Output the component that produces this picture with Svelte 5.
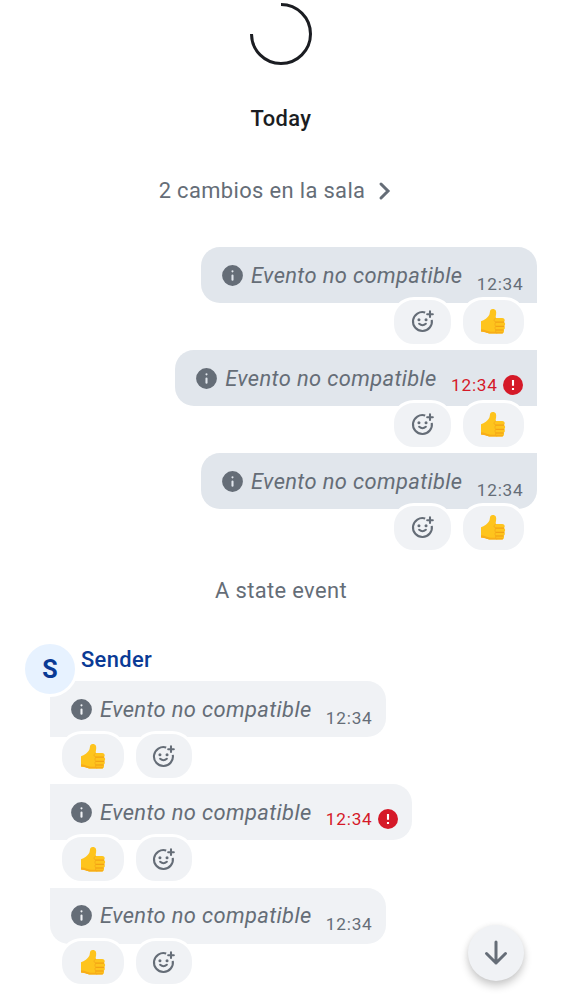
<script>
  const outgoing = [
    { failed: false },
    { failed: true },
    { failed: false }
  ];
  const incoming = [
    { failed: false },
    { failed: true },
    { failed: false }
  ];
</script>

{#snippet info()}
  <svg class="info" viewBox="0 0 24 24">
    <path fill="currentColor" fill-rule="evenodd" d="M12 2a10 10 0 1 1 0 20 10 10 0 0 1 0-20Zm0 9a1 1 0 0 0-1 1v4a1 1 0 0 0 2 0v-4a1 1 0 0 0-1-1Zm0-4a1 1 0 1 0 0 2 1 1 0 0 0 0-2Z" />
  </svg>
{/snippet}

{#snippet bubble(message)}
  <div class="bubble">
    {@render info()}
    <span class="body">Evento no compatible</span>
    <span class="meta" class:failed={message.failed}>
      <span class="time">12:34</span>
      {#if message.failed}
        <svg class="error" viewBox="0 0 20 20">
          <circle cx="10" cy="10" r="10" fill="#d51928" />
          <path d="M10 5v5.8M10 13v2" stroke="#fff" stroke-width="2.1" />
        </svg>
      {/if}
    </span>
  </div>
{/snippet}

{#snippet thumb()}
  <div class="pill thumb">
    <svg viewBox="0 0 26 27" role="img" aria-label="👍">
      <path fill="#fec41d" d="M1 13.2C4.2 12.4 8 9.5 9.3 6.7 10 5 9.7 3 10.5 1.9 11.6.5 15.2.7 15.9 2.8c.8 2.4-.2 5.1-.3 7.1h6.6c1.7 0 2.6 1.1 2.5 2.5-.1.8-.4 1.3-.8 1.7 1.5.8 1.7 3 .3 4.1 1 1 .9 2.8-.5 3.6 1 2-.3 3.8-2.2 3.8H12c-4.5 0-6.2-1.8-11-2.2Z" />
      <path fill="#f8ad18" d="M1 21.2c4.8.5 7 2.5 11 2.5h10.9c.8 1.2-.2 1.9-1.4 1.9H12c-4.5 0-6.2-1.8-11-2.2Z" />
      <path fill="none" stroke="#f09a12" stroke-width="1" stroke-linecap="round" d="M15.7 14.1h8M15.8 18.3h8.2M15.8 22h7.5" />
      <path fill="none" stroke="#f5a91a" stroke-width=".9" stroke-linecap="round" d="M15.6 9.9c-1.5 1-1.9 2.4-1.1 3.4.5.5 1.2.7 1.5.8-1.3 1.2-1.3 3.2-.2 4.2-1.1 1-1 2.8.2 3.7-.7 1.2-.5 2.4.4 3.2" />
    </svg>
  </div>
{/snippet}

{#snippet addReaction()}
  <div class="pill add">
    <svg viewBox="0 0 24 24" fill="none" stroke="currentColor" stroke-width="2">
      <path d="M14.6 3.3A9.1 9.1 0 1 0 20.9 10.4" />
      <path d="M19.2 2.3v5.4M16.5 5h5.4" stroke-linecap="round" />
      <path d="M8.8 14.2q3.2 2.8 6.4 0" stroke-linecap="round" />
      <circle cx="8.6" cy="10.3" r="1.45" fill="currentColor" stroke="none" />
      <circle cx="15.4" cy="10.3" r="1.45" fill="currentColor" stroke="none" />
    </svg>
  </div>
{/snippet}

<main class="timeline">
  <div class="loading">
    <svg viewBox="0 0 62 62" fill="none" stroke="#1b1d22" stroke-width="3">
      <path d="M31 1.5A29.5 29.5 0 1 1 1.5 31" />
    </svg>
  </div>
  <div class="day">Today</div>
  <div class="changes">
    <span>2 cambios en la sala</span>
    <svg viewBox="0 0 12 18" fill="none" stroke="currentColor" stroke-width="3" stroke-linecap="round"><path d="M2 2l7 7-7 7" /></svg>
  </div>

  <section class="group mine">
    {#each outgoing as message}
      <article class="message">
        {@render bubble(message)}
        <div class="reactions">{@render addReaction()}{@render thumb()}</div>
      </article>
    {/each}
  </section>

  <div class="state">A state event</div>

  <header class="sender">
    <div class="avatar">S</div>
    <div class="name">Sender</div>
  </header>
  <section class="group theirs">
    {#each incoming as message}
      <article class="message">
        {@render bubble(message)}
        <div class="reactions">{@render thumb()}{@render addReaction()}</div>
      </article>
    {/each}
  </section>

  <button class="jump" aria-label="Ir al final">
    <svg viewBox="0 0 24 26" fill="none" stroke="currentColor" stroke-width="3" stroke-linecap="round" stroke-linejoin="round"><path d="M12 2v21M2.5 13.5l9.5 9.5 9.5-9.5" /></svg>
  </button>
</main>

<style>
  :global(body) { margin: 0; background: #fff; }
  .timeline {
    position: relative;
    width: 562px;
    height: 1000px;
    box-sizing: border-box;
    padding-top: 3px;
    overflow: hidden;
    display: flex;
    flex-direction: column;
    background: #fff;
    color: #656d77;
    font-family: Roboto, sans-serif;
    font-size: 21.9px;
    line-height: 32px;
    letter-spacing: 0.37px;
  }
  .timeline > * { flex-shrink: 0; }
  svg { display: block; flex-shrink: 0; overflow: visible; }
  .loading { display: flex; justify-content: center; height: 63px; }
  .loading svg { width: 62px; height: 62px; }
  .day { margin-top: 37px; text-align: center; color: #1b1d22; font-weight: 500; }
  .changes {
    display: flex;
    justify-content: center;
    align-items: center;
    gap: 14px;
    margin: 40px 12px 0 0;
  }
  .changes svg { width: 12px; height: 18px; }
  .group { display: flex; flex-direction: column; }
  .mine { margin: 40px 25px 0 0; align-items: flex-end; }
  .theirs { margin-left: 50px; align-items: flex-start; }
  .message { display: flex; flex-direction: column; height: 103.1px; }
  .mine .message { align-items: flex-end; height: 103px; }
  .bubble {
    display: flex;
    align-items: center;
    height: 56px;
    box-sizing: border-box;
    padding: 0 13.5px 0 20px;
  }
  .mine .bubble { background: #e1e6ec; border-radius: 19px 0 0 19px; }
  .mine .message:first-child .bubble { border-top-right-radius: 19px; }
  .mine .message:last-child .bubble { border-bottom-right-radius: 19px; }
  .theirs .bubble { background: #f0f2f5; border-radius: 0 19px 19px 0; }
  .theirs .message:last-child .bubble { border-bottom-left-radius: 19px; }
  .info { width: 25px; height: 25px; margin-left: -1px; }
  .body { margin: 1px 0 0 6px; font-style: italic; white-space: nowrap; }
  .meta {
    display: flex;
    align-items: center;
    align-self: flex-end;
    gap: 5.6px;
    height: 20px;
    margin: 0 0 9.4px 14.3px;
    font-size: 17.2px;
    line-height: 20px;
    letter-spacing: 0.78px;
  }
  .failed { color: #d51928; margin-bottom: 11.4px; margin-right: 0.2px; }
  .error { width: 20px; height: 20px; }
  .reactions { display: flex; gap: 6px; margin-top: -6px; }
  .mine .reactions { margin-right: 10px; }
  .theirs .reactions { margin-left: 9px; }
  .pill {
    display: flex;
    align-items: center;
    justify-content: center;
    height: 43.5px;
    border: 3px solid #fff;
    border-radius: 23px;
    background: #f0f2f5;
  }
  .thumb { width: 61.5px; }
  .thumb svg { width: 26px; height: 27px; }
  .add { width: 56.5px; }
  .add svg { width: 25px; height: 25px; }
  .state { margin-top: 19px; text-align: center; }
  .sender {
    display: flex;
    align-items: flex-start;
    height: 40px;
    margin: 34px 0 0.4px 22px;
    color: #0a3a95;
    font-weight: 500;
    position: relative;
    z-index: 1;
  }
  .avatar {
    width: 50px;
    height: 50px;
    border: 3px solid #fff;
    border-radius: 50%;
    background: #e7f2ff;
    text-align: center;
    font-size: 25px;
    font-weight: 700;
    line-height: 51px;
    letter-spacing: 0;
  }
  .name { margin: 3px 0 0 3px; }
  .jump {
    position: absolute;
    right: 37.6px;
    bottom: 19px;
    width: 56px;
    height: 56px;
    display: flex;
    align-items: center;
    justify-content: center;
    padding: 0;
    border: 0;
    border-radius: 50%;
    background: #f0f2f5;
    color: #656d77;
    box-shadow: 0 5px 9px rgba(0, 0, 0, 0.2), 0 0 6px rgba(0, 0, 0, 0.05);
  }
  .jump svg { width: 24px; height: 26px; }
</style>
